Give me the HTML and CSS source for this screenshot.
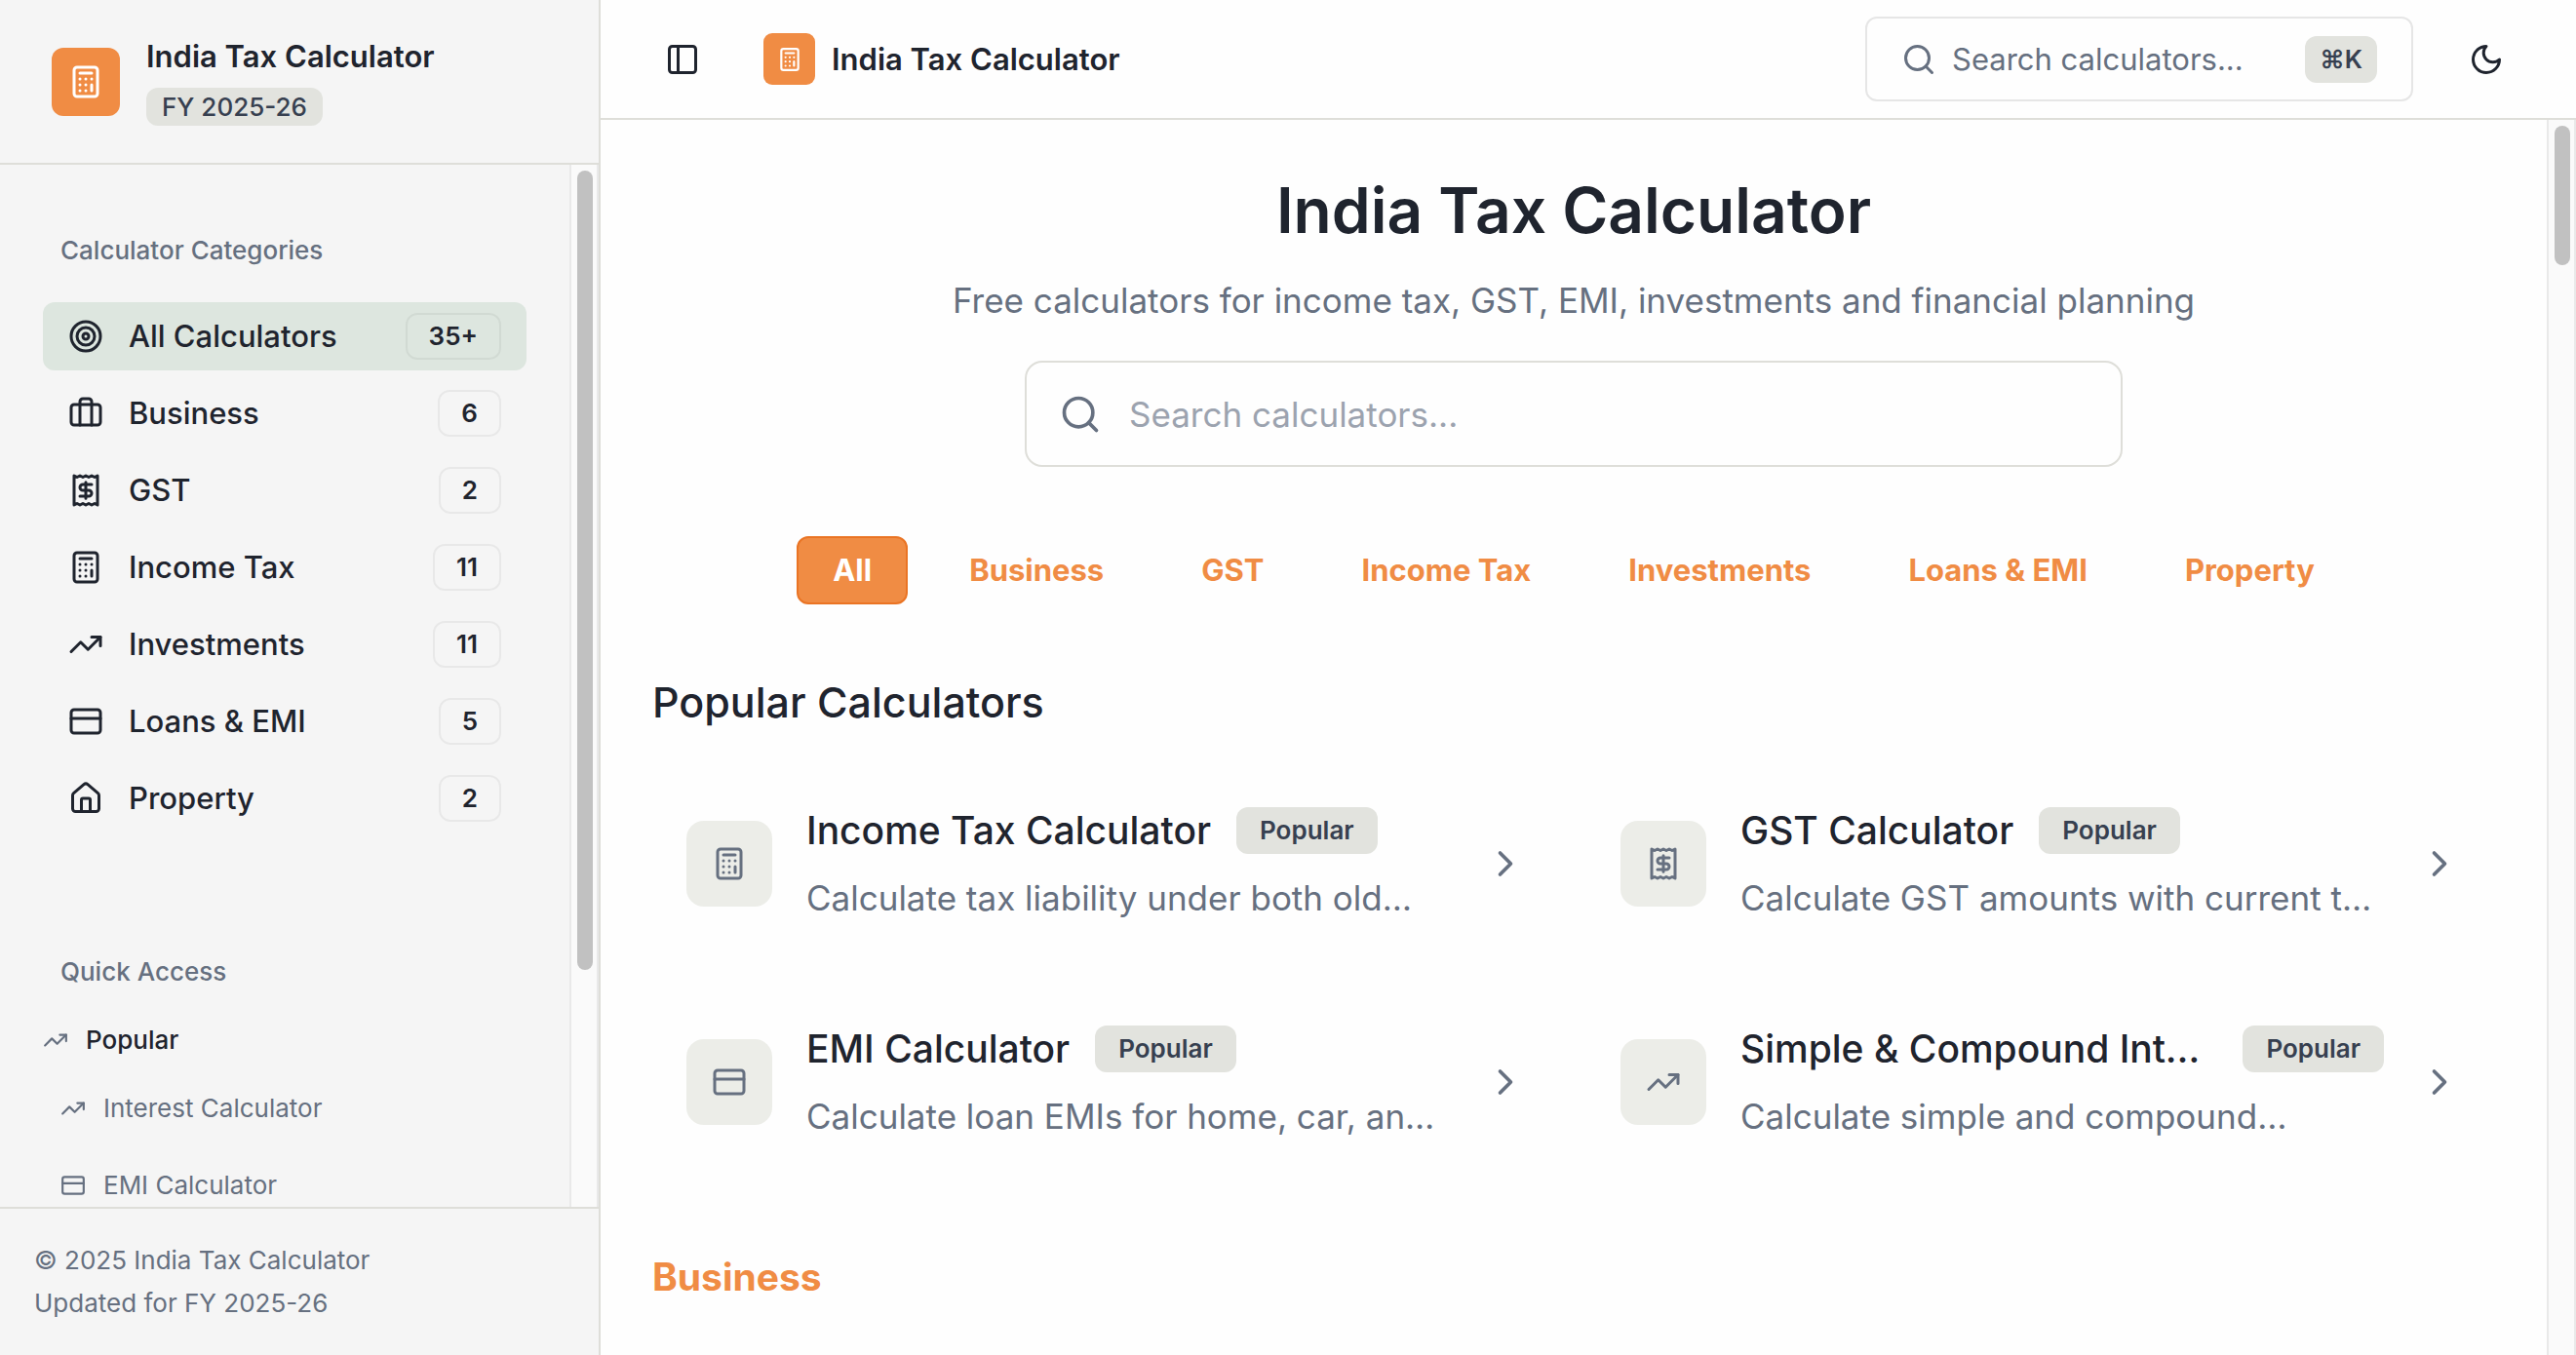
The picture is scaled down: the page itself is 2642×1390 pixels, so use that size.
FILE: index.html
```html
<!DOCTYPE html>
<html lang="en">
<head>
  <meta charset="utf-8">
  <meta name="viewport" content="width=device-width,initial-scale=1.0">
  <title>India Tax Calculator</title>
  <link rel="stylesheet" href="styles.css">
</head>
<body>
  <!-- icon sprite -->
  <svg class="sprite" aria-hidden="true">
    <symbol id="calculator" viewBox="0 0 24 24">
      <rect width="16" height="20" x="4" y="2" rx="2"/>
      <path d="M8 6h8M16 14v4M16 10h.01M12 10h.01M8 10h.01M12 14h.01M8 14h.01M12 18h.01M8 18h.01"/>
    </symbol>
    <symbol id="target" viewBox="0 0 24 24">
      <circle cx="12" cy="12" r="10"/><circle cx="12" cy="12" r="6"/><circle cx="12" cy="12" r="2"/>
    </symbol>
    <symbol id="briefcase" viewBox="0 0 24 24">
      <path d="M16 20V4a2 2 0 0 0-2-2h-4a2 2 0 0 0-2 2v16"/>
      <rect width="20" height="14" x="2" y="6" rx="2"/>
    </symbol>
    <symbol id="receipt" viewBox="0 0 24 24">
      <path d="M4 2v20l2-1 2 1 2-1 2 1 2-1 2 1 2-1 2 1V2l-2 1-2-1-2 1-2-1-2 1-2-1-2 1Z"/>
      <path d="M16 8h-6a2 2 0 1 0 0 4h4a2 2 0 1 1 0 4H8M12 17.5v-11"/>
    </symbol>
    <symbol id="trending" viewBox="0 0 24 24">
      <path d="M22 7l-8.5 8.5-5-5L2 17"/><path d="M16 7h6v6"/>
    </symbol>
    <symbol id="card" viewBox="0 0 24 24">
      <rect width="20" height="16" x="2" y="4" rx="2"/><path d="M2 10h20"/>
    </symbol>
    <symbol id="house" viewBox="0 0 24 24">
      <path d="M15 21v-8a1 1 0 0 0-1-1h-4a1 1 0 0 0-1 1v8"/>
      <path d="M3 10a2 2 0 0 1 .709-1.528l7-5.999a2 2 0 0 1 2.582 0l7 5.999A2 2 0 0 1 21 10v9a2 2 0 0 1-2 2H5a2 2 0 0 1-2-2z"/>
    </symbol>
    <symbol id="panel" viewBox="0 0 24 24">
      <rect width="18" height="18" x="3" y="3" rx="2"/><path d="M9 3v18"/>
    </symbol>
    <symbol id="search" viewBox="0 0 24 24">
      <circle cx="11" cy="11" r="8"/><path d="m21 21-4.3-4.3"/>
    </symbol>
    <symbol id="moon" viewBox="0 0 24 24">
      <path d="M12 3a6 6 0 0 0 9 9 9 9 0 1 1-9-9Z"/>
    </symbol>
    <symbol id="chevron" viewBox="0 0 24 24">
      <path d="m9 18 6-6-6-6"/>
    </symbol>
  </svg>

  <div class="app">
    <aside class="sidebar">
      <div class="sidebar-header">
        <span class="logo"><svg class="icon"><use href="#calculator"/></svg></span>
        <div class="brand">
          <span class="brand-name">India Tax Calculator</span>
          <span class="year">FY 2025-26</span>
        </div>
      </div>

      <div class="scroll-area sidebar-body">
        <div class="sidebar-content">
          <nav aria-label="Calculator Categories">
            <div class="group-label">Calculator Categories</div>
            <ul class="menu">
              <li><a class="menu-item active" href="#"><svg class="icon"><use href="#target"/></svg>All Calculators<span class="count">35+</span></a></li>
              <li><a class="menu-item" href="#"><svg class="icon"><use href="#briefcase"/></svg>Business<span class="count">6</span></a></li>
              <li><a class="menu-item" href="#"><svg class="icon"><use href="#receipt"/></svg>GST<span class="count">2</span></a></li>
              <li><a class="menu-item" href="#"><svg class="icon"><use href="#calculator"/></svg>Income Tax<span class="count">11</span></a></li>
              <li><a class="menu-item" href="#"><svg class="icon"><use href="#trending"/></svg>Investments<span class="count">11</span></a></li>
              <li><a class="menu-item" href="#"><svg class="icon"><use href="#card"/></svg>Loans &amp; EMI<span class="count">5</span></a></li>
              <li><a class="menu-item" href="#"><svg class="icon"><use href="#house"/></svg>Property<span class="count">2</span></a></li>
            </ul>
          </nav>

          <nav class="quick" aria-label="Quick Access">
            <div class="group-label">Quick Access</div>
            <div class="quick-title"><svg class="icon small"><use href="#trending"/></svg><span>Popular</span></div>
            <ul class="menu">
              <li><a class="quick-item" href="#"><svg class="icon small"><use href="#trending"/></svg>Interest Calculator</a></li>
              <li><a class="quick-item" href="#"><svg class="icon small"><use href="#card"/></svg>EMI Calculator</a></li>
            </ul>
          </nav>
        </div>
        <div class="scrollbar"><div class="thumb" style="height: 77.6%"></div></div>
      </div>

      <div class="sidebar-footer">
        <div>© 2025 India Tax Calculator</div>
        <div>Updated for FY 2025-26</div>
      </div>
    </aside>

    <div class="page">
      <header class="topbar">
        <button type="button" class="icon-btn" aria-label="Toggle sidebar"><svg class="icon"><use href="#panel"/></svg></button>
        <a class="home" href="#">
          <span class="logo logo-small"><svg class="icon small"><use href="#calculator"/></svg></span>
          <span class="brand-name">India Tax Calculator</span>
        </a>
        <button type="button" class="search-btn">
          <svg class="icon"><use href="#search"/></svg>
          <span>Search calculators...</span>
          <kbd>⌘K</kbd>
        </button>
        <button type="button" class="icon-btn" aria-label="Toggle theme"><svg class="icon"><use href="#moon"/></svg></button>
      </header>

      <div class="scroll-area">
        <main class="content">
          <h1>India Tax Calculator</h1>
          <p class="subtitle">Free calculators for income tax, GST, EMI, investments and financial planning</p>

          <label class="search-box">
            <svg class="icon large"><use href="#search"/></svg>
            <input type="search" placeholder="Search calculators..." aria-label="Search calculators">
          </label>

          <div class="tabs">
            <button type="button" class="tab selected">All</button>
            <button type="button" class="tab">Business</button>
            <button type="button" class="tab">GST</button>
            <button type="button" class="tab">Income Tax</button>
            <button type="button" class="tab">Investments</button>
            <button type="button" class="tab">Loans &amp; EMI</button>
            <button type="button" class="tab">Property</button>
          </div>

          <h2>Popular Calculators</h2>
          <div class="cards">
            <a class="card" href="#">
              <span class="card-icon"><svg class="icon"><use href="#calculator"/></svg></span>
              <div class="card-text">
                <div class="card-title"><h3>Income Tax Calculator</h3><span class="tag">Popular</span></div>
                <p>Calculate tax liability under both old and new tax regimes</p>
              </div>
              <svg class="icon large"><use href="#chevron"/></svg>
            </a>
            <a class="card" href="#">
              <span class="card-icon"><svg class="icon"><use href="#receipt"/></svg></span>
              <div class="card-text">
                <div class="card-title"><h3>GST Calculator</h3><span class="tag">Popular</span></div>
                <p>Calculate GST amounts with current tax rates</p>
              </div>
              <svg class="icon large"><use href="#chevron"/></svg>
            </a>
            <a class="card" href="#">
              <span class="card-icon"><svg class="icon"><use href="#card"/></svg></span>
              <div class="card-text">
                <div class="card-title"><h3>EMI Calculator</h3><span class="tag">Popular</span></div>
                <p>Calculate loan EMIs for home, car, and personal loans</p>
              </div>
              <svg class="icon large"><use href="#chevron"/></svg>
            </a>
            <a class="card" href="#">
              <span class="card-icon"><svg class="icon"><use href="#trending"/></svg></span>
              <div class="card-text">
                <div class="card-title"><h3>Simple &amp; Compound Interest Calculator</h3><span class="tag">Popular</span></div>
                <p>Calculate simple and compound interest on your savings</p>
              </div>
              <svg class="icon large"><use href="#chevron"/></svg>
            </a>
          </div>

          <h2 class="category">Business</h2>
        </main>
        <div class="scrollbar"><div class="thumb" style="height: 11.4%"></div></div>
      </div>
    </div>
  </div>
</body>
</html>
```
FILE: styles.css
```css
:root {
  --text: #1f242e;
  --muted: #667080;
  --border: #deded9;
  --line: #e6e6e6;
  --orange: #f08c44;
  --tag: #e2e3de;
}

* {
  box-sizing: border-box;
}

body {
  margin: 0;
  background: #fefefe;
  color: var(--text);
  font-family: Inter, "Noto Sans", sans-serif;
  font-size: 31px;
  line-height: 40px;
}

h1, h2, h3, p {
  margin: 0;
}

a {
  color: inherit;
  text-decoration: none;
}

button {
  border: 0;
  padding: 0;
  background: none;
  color: inherit;
  font: inherit;
}

.sprite {
  display: none;
}

.icon {
  width: 36px;
  height: 36px;
  flex: none;
  fill: none;
  stroke: currentColor;
  stroke-width: 2;
  stroke-linecap: round;
  stroke-linejoin: round;
}

.icon.small {
  width: 26px;
  height: 26px;
}

.icon.large {
  width: 44px;
  height: 44px;
  color: var(--muted);
}

.app {
  display: flex;
  height: 100vh;
  overflow: hidden;
}

/* Scroll areas */
.scroll-area {
  display: flex;
  flex: 1;
  min-height: 0;
  overflow: hidden;
}

.scrollbar {
  flex: none;
  width: 30px;
  padding: 6px;
  background: #fafafa;
  border: solid #e9e9e9;
  border-width: 0 2px;
}

.thumb {
  width: 16px;
  border-radius: 8px;
  background: #c1c1c1;
}

/* Sidebar */
.sidebar {
  display: flex;
  flex-direction: column;
  flex: none;
  width: 616px;
  background: #f5f5f5;
  border-right: 2px solid var(--border);
}

.sidebar-header {
  display: flex;
  align-items: center;
  gap: 27px;
  height: 169px;
  padding: 0 53px;
  border-bottom: 2px solid var(--border);
}

.logo {
  display: flex;
  align-items: center;
  justify-content: center;
  flex: none;
  width: 70px;
  height: 70px;
  border-radius: 12px;
  background: var(--orange);
  color: #fff;
}

.logo-small {
  width: 53px;
  height: 53px;
  border-radius: 9px;
}

.brand {
  display: flex;
  flex-direction: column;
  align-items: flex-start;
  gap: 12px;
}

.brand-name {
  font-weight: 600;
}

.year,
.tag,
.count,
kbd {
  border-radius: 12px;
  font-family: inherit;
  font-size: 26px;
}

.year {
  padding: 0 16px;
  background: var(--tag);
  color: #374050;
  font-weight: 500;
  line-height: 39px;
}

.sidebar-content {
  flex: 1;
  min-width: 0;
  padding: 53px 44px 0;
}

.group-label {
  padding-left: 18px;
  color: var(--muted);
  font-size: 26px;
  font-weight: 500;
  line-height: 70px;
}

.menu {
  display: flex;
  flex-direction: column;
  gap: 9px;
  margin: 0;
  padding: 0;
  list-style: none;
}

.group-label + .menu {
  margin-top: 18px;
}

.menu-item {
  display: flex;
  align-items: center;
  gap: 26px;
  height: 70px;
  padding: 0 26px;
  border-radius: 12px;
  font-weight: 500;
}

.menu-item.active {
  background: #dde6df;
}

.count {
  margin-left: auto;
  padding: 0 22px;
  border: 2px solid rgba(0, 0, 0, 0.05);
  font-weight: 600;
  line-height: 44px;
}

.quick {
  margin-top: 108px;
  color: var(--muted);
  font-size: 26px;
}

.quick-title,
.quick-item {
  display: flex;
  align-items: center;
  gap: 18px;
  height: 70px;
}

.quick-title span {
  color: var(--text);
  font-weight: 500;
}

.quick-item {
  padding-left: 18px;
}

.sidebar-footer {
  padding: 31px 35px;
  border-top: 2px solid var(--border);
  color: var(--muted);
  font-size: 26px;
  line-height: 44px;
}

/* Top bar */
.page {
  display: flex;
  flex-direction: column;
  flex: 1;
  min-width: 0;
}

.topbar {
  display: flex;
  align-items: center;
  height: 123px;
  padding: 0 53px 0 44px;
  border-bottom: 2px solid var(--border);
}

.icon-btn {
  display: flex;
  align-items: center;
  justify-content: center;
  width: 79px;
  height: 79px;
}

.home {
  display: flex;
  align-items: center;
  gap: 17px;
  margin: 0 auto 0 44px;
}

.search-btn {
  display: flex;
  align-items: center;
  gap: 16px;
  width: 562px;
  height: 87px;
  margin-right: 35px;
  padding: 0 35px;
  border: 2px solid var(--line);
  border-radius: 12px;
  color: var(--muted);
}

kbd {
  margin-left: auto;
  padding: 0 15px;
  background: var(--tag);
  color: #374050;
  font-weight: 600;
  line-height: 48px;
}

/* Content */
.content {
  flex: 1;
  min-width: 0;
  padding: 53px 53px 0;
}

h1 {
  font-size: 64px;
  font-weight: 600;
  line-height: 80px;
  text-align: center;
}

.subtitle {
  margin-top: 23px;
  color: var(--muted);
  font-size: 35px;
  line-height: 58px;
  text-align: center;
}

.search-box {
  display: flex;
  align-items: center;
  gap: 28px;
  max-width: 1126px;
  height: 109px;
  margin: 33px auto 0;
  padding: 0 33px;
  border: 2px solid var(--border);
  border-radius: 18px;
}

.search-box input {
  flex: 1;
  min-width: 0;
  padding: 0;
  border: 0;
  outline: 0;
  background: none;
  color: var(--text);
  font: inherit;
  font-size: 35px;
}

.search-box input::placeholder {
  color: #9ca3af;
}

.tabs {
  display: flex;
  justify-content: center;
  gap: 26px;
  margin: 71px 0 70px;
}

.tab {
  height: 70px;
  padding: 0 35px;
  border: 2px solid transparent;
  border-radius: 12px;
  color: var(--orange);
  font-weight: 700;
}

.tab.selected {
  background: var(--orange);
  border-color: #ea7424;
  color: #fff;
}

h2 {
  font-size: 43px;
  font-weight: 500;
  line-height: 60px;
}

.cards {
  display: grid;
  grid-template-columns: 1fr 1fr;
  gap: 26px;
  margin: 37px 0 71px;
}

.card {
  display: flex;
  align-items: center;
  gap: 35px;
  min-width: 0;
  padding: 36px 35px;
}

.card-icon {
  display: flex;
  align-items: center;
  justify-content: center;
  flex: none;
  width: 88px;
  height: 88px;
  border-radius: 18px;
  background: #ecede8;
  color: var(--muted);
}

.card-text {
  flex: 1;
  min-width: 0;
}

.card-title {
  display: flex;
  align-items: center;
  gap: 26px;
  margin-bottom: 12px;
}

h3 {
  overflow: hidden;
  font-size: 39px;
  font-weight: 500;
  line-height: 58px;
  text-overflow: ellipsis;
  white-space: nowrap;
}

.tag {
  flex: none;
  padding: 0 24px;
  background: var(--tag);
  color: #374050;
  font-weight: 600;
  line-height: 48px;
}

.card p {
  display: -webkit-box;
  overflow: hidden;
  -webkit-box-orient: vertical;
  -webkit-line-clamp: 1;
  color: var(--muted);
  font-size: 35px;
  line-height: 56px;
}

.category {
  color: var(--orange);
  font-size: 39px;
  font-weight: 700;
}
```
